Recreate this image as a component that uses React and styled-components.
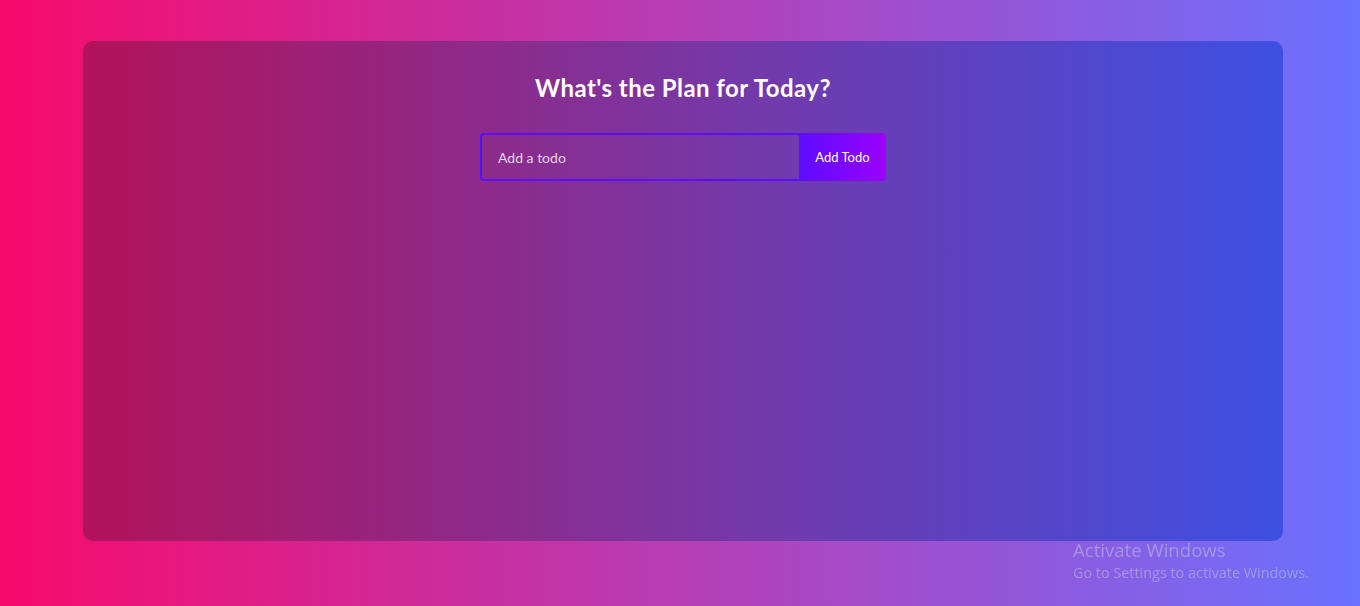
import React, { useState } from "react";
import styled, { createGlobalStyle } from "styled-components";

const GlobalStyle = createGlobalStyle`
  * {
    box-sizing: border-box;
  }
  html, body {
    margin: 0;
    padding: 0;
  }
  body {
    min-height: 100vh;
    background: linear-gradient(90deg, #f70b6c 0%, #a948c4 60%, #6a72ff 100%);
    font-family: Lato, "Liberation Sans", sans-serif;
  }
`;

const Page = styled.div`
  width: 100vw;
  height: 100vh;
  padding: 41px 0 0 83px;
  overflow: hidden;
`;

const TodoApp = styled.div`
  width: 1200px;
  height: 500px;
  border-radius: 10px;
  background: linear-gradient(90deg, #b2135a 0%, #7a36a2 50%, #3d50e2 100%);
  display: flex;
  flex-direction: column;
  align-items: center;
  padding-top: 33px;
`;

const Title = styled.h1`
  margin: 0;
  color: #fff;
  font-size: 24px;
  line-height: 28px;
  font-weight: bold;
  letter-spacing: 0.45px;
`;

const TodoForm = styled.form`
  display: flex;
  margin-top: 31px;
  height: 48px;
`;

const TodoInput = styled.input`
  width: 319px;
  height: 48px;
  padding: 0 16px;
  border: 2px solid #5d0cff;
  border-right: none;
  border-radius: 4px 0 0 4px;
  background: transparent;
  color: #fff;
  font-family: Lato, "Liberation Sans", sans-serif;
  font-size: 14px;
  outline: none;
  caret-color: #fff;

  &::placeholder {
    color: #e2d6ef;
  }
`;

const TodoButton = styled.button`
  height: 48px;
  width: 87px;
  border: none;
  border-radius: 0 4px 4px 0;
  background: linear-gradient(90deg, #5d0cff 0%, #9b00fa 100%);
  color: #fff;
  font-family: Lato, "Liberation Sans", sans-serif;
  font-size: 13px;
  cursor: pointer;
`;

const Watermark = styled.div`
  position: fixed;
  left: 1073px;
  top: 539px;
  color: rgba(200, 200, 230, 0.5);
  font-family: "Open Sans", "Noto Sans", sans-serif;
  line-height: 1.2;
  pointer-events: none;
`;

const WatermarkTitle = styled.div`
  font-size: 18.6px;
`;

const WatermarkText = styled.div`
  font-size: 14.4px;
  margin-top: 3px;
`;

function App() {
  const [value, setValue] = useState("");

  return (
    <>
      <GlobalStyle />
      <Page>
        <TodoApp>
          <Title>What's the Plan for Today?</Title>
          <TodoForm onSubmit={(e) => e.preventDefault()}>
            <TodoInput
              autoFocus
              placeholder="Add a todo"
              value={value}
              onChange={(e) => setValue(e.target.value)}
            />
            <TodoButton type="submit">Add Todo</TodoButton>
          </TodoForm>
        </TodoApp>
      </Page>
      <Watermark>
        <WatermarkTitle>Activate Windows</WatermarkTitle>
        <WatermarkText>Go to Settings to activate Windows.</WatermarkText>
      </Watermark>
    </>
  );
}

export default App;
